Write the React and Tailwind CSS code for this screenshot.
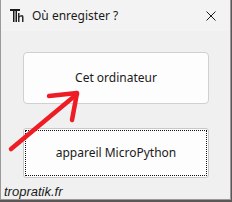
import React from "react";

function Logo() {
  return (
    <svg width="15" height="14" viewBox="0 0 15 14" className="shrink-0">
      <rect x="0" y="0" width="10" height="2" fill="#1a1a1a" />
      <rect x="3" y="0" width="1.5" height="13" fill="#1a1a1a" />
      <rect x="5.5" y="0" width="1.5" height="13" fill="#1a1a1a" />
      <rect x="8" y="4" width="1.5" height="9" fill="#2a2a2a" />
      <path d="M8.5 7.5 Q10 6 12 6 Q13.5 6 13.5 8 V13 H12 V8.5 Q12 7.5 11 7.5 Q9.5 7.5 9 9" fill="#2a2a2a" />
    </svg>
  );
}

export default function App() {
  const font = { fontFamily: '"Noto Sans", "Open Sans", sans-serif' };
  return (
    <div className="w-[232px] h-[202px] bg-[#5c5656] overflow-hidden">
      <div className="relative w-[231px] h-[200px] bg-[#f0f0f0] border-l border-r border-b border-[#9a9a9a] flex flex-col" style={font}>
        <div className="h-[31px] bg-[#f3f3f3] flex items-center pl-[9px] pr-[14px] shrink-0">
          <Logo />
          <span className="ml-[7px] text-[12px] text-[#1a1a1a] leading-none">Où enregister ?</span>
          <svg width="10" height="10" viewBox="0 0 10 10" className="ml-auto">
            <path d="M0.5 0.5 L9.5 9.5 M9.5 0.5 L0.5 9.5" stroke="#1a1a1a" strokeWidth="1" />
          </svg>
        </div>
        <div className="flex flex-col pl-[22px] pt-[21px]">
          <div className="w-[186px] h-[52px] bg-[#fdfdfd] border border-[#d0d0d0] rounded-[4px] flex items-center justify-center text-[12px] text-[#1a1a1a]">
            Cet ordinateur
          </div>
          <div className="mt-[24px] w-[186px] h-[50px] bg-[#fdfdfd] border border-[#c8c8c8] rounded-[3px] p-[1px]">
            <div className="w-full h-full border border-dotted border-[#111] flex items-center justify-center text-[12px] text-[#1a1a1a]">
              appareil MicroPython
            </div>
          </div>
        </div>
        <div className="pl-[3px] mt-[7px] text-[13px] italic text-[#1a1a1a] leading-none" style={{ fontFamily: '"Liberation Sans", sans-serif' }}>
          tropratik.fr
        </div>
        <svg className="absolute left-0 top-0 pointer-events-none" width="231" height="200" viewBox="0 0 231 200">
          <g stroke="#ee1c25" strokeWidth="4.5" strokeLinecap="round" strokeLinejoin="round" fill="none">
            <path d="M10 149 L76 94" />
            <path d="M48 96 L76 93 L71 120" />
          </g>
        </svg>
      </div>
    </div>
  );
}
